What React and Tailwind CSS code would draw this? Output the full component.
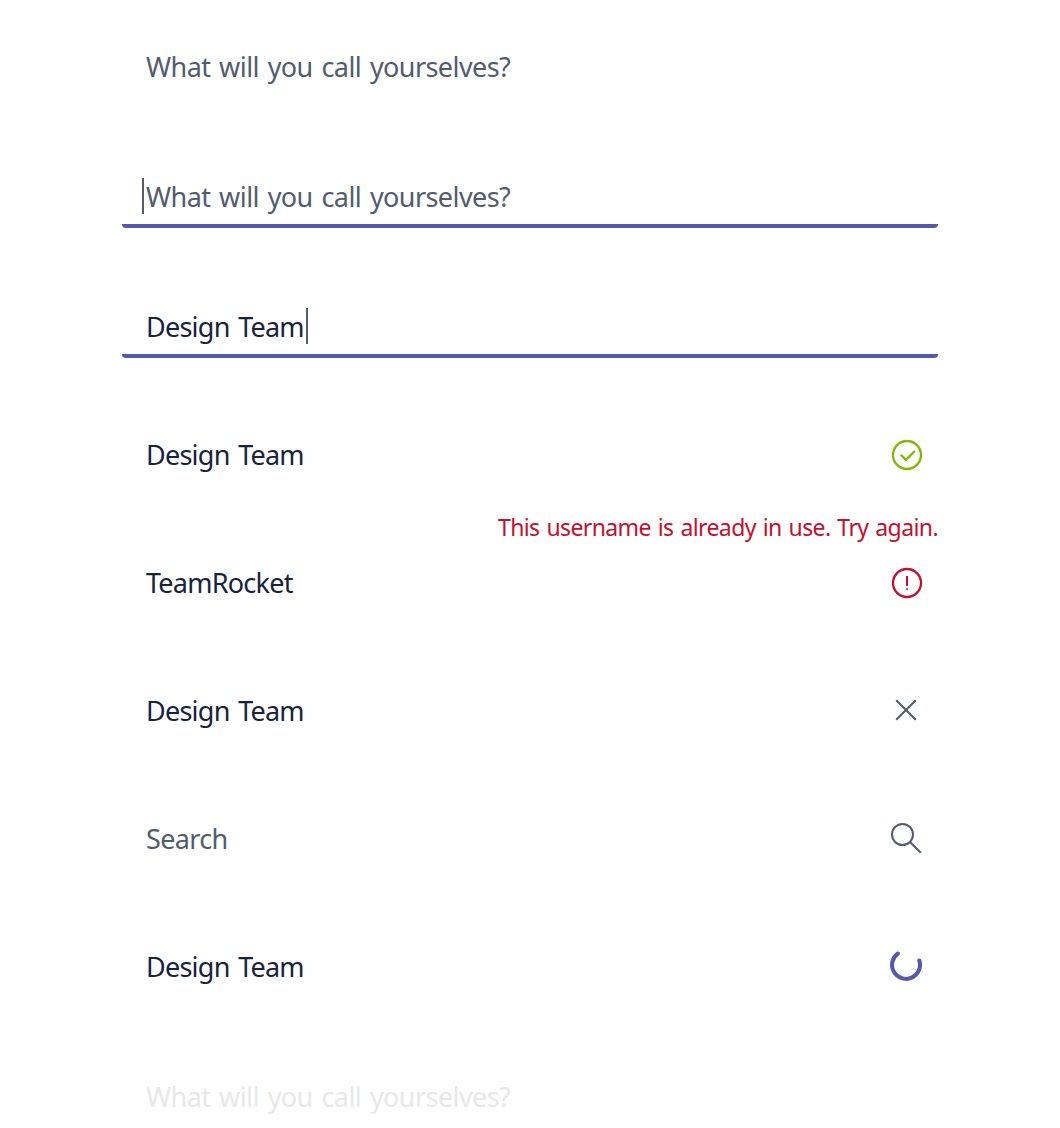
import React from "react";

const Check = () => (
  <svg className="mt-0.5 size-8" viewBox="0 0 32 32" fill="none" stroke="#7fba00">
    <circle cx="16" cy="16" r="14" strokeWidth="2.3" />
    <path d="M9.8 15.8 14.9 20.9 23.8 12" strokeWidth="2.3" />
  </svg>
);

const Alert = () => (
  <svg className="mt-0.5 size-8" viewBox="0 0 32 32" fill="none" stroke="#c50f2f">
    <circle cx="16" cy="16" r="14" strokeWidth="2.3" />
    <path d="M16 9v10" strokeWidth="2" />
    <path d="M16 21v2" strokeWidth="2" strokeOpacity="0.7" />
  </svg>
);

const Close = () => (
  <svg className="mt-0.5 size-8" viewBox="0 0 32 32" fill="none" stroke="#525c6e" strokeWidth="2">
    <path d="M5.2 5.2 24.8 24.8M24.8 5.2 5.2 24.8" />
  </svg>
);

const Search = () => (
  <svg className="mt-0.5 size-8" viewBox="0 0 32 32" fill="none" stroke="#525c6e" strokeWidth="2">
    <circle cx="11.5" cy="11.5" r="10.5" />
    <path d="M19 19 29.8 29.8" />
  </svg>
);

const Spinner = () => (
  <svg className="mr-px mb-0.5 size-8" viewBox="0 0 32 32" fill="none" stroke="#5558af" strokeWidth="4" strokeLinecap="round">
    <path d="M7.9 4.5A14 14 0 1 0 29.3 11.5" />
  </svg>
);

const Caret = () => <span className="h-9 w-0.5 shrink-0 bg-[#525c6e]" />;

const Underline = () => <div className="-mt-1 h-1 rounded-b-[4px] bg-[#5558af]" />;

function Field({ children, className = "" }) {
  return (
    <div className={`flex h-16 shrink-0 items-center justify-between pr-[15px] pl-6 ${className}`}>
      {children}
    </div>
  );
}

const prompt = "pt-0.5 tracking-[-0.58px] [word-spacing:2.3px]";
const value = "pt-0.5 text-[#16233a] tracking-[-0.76px] [word-spacing:2.3px]";

export default function App() {
  return (
    <main className="flex h-[1128px] w-[1060px] flex-col overflow-hidden bg-white px-[122px] pt-[34px] font-['Noto_Sans','Segoe_UI',sans-serif] text-[27px] leading-9 whitespace-nowrap">
      <Field>
        <span className={`text-[#525c6e] ${prompt}`}>What will you call yourselves?</span>
      </Field>

      <div className="mt-[66px] h-16">
        <div className="flex h-16 items-center pl-5">
          <Caret />
          <span className={`ml-0.5 text-[#525c6e] ${prompt}`}>What will you call yourselves?</span>
        </div>
        <Underline />
      </div>

      <div className="mt-[66px] h-16">
        <div className="flex h-16 items-center pl-6">
          <span className={`w-40 ${value}`}>Design Team</span>
          <Caret />
        </div>
        <Underline />
      </div>

      <Field className="mt-16">
        <span className={value}>Design Team</span>
        <Check />
      </Field>

      <div className="flex h-16 items-end justify-end pb-[5px] text-[23px] text-[#c50f2f]">
        <span className="tracking-[-0.6px] [word-spacing:1.5px]">This username is already in use. Try again.</span>
      </div>

      <Field>
        <span className={value}>TeamRocket</span>
        <Alert />
      </Field>

      <Field className="mt-16">
        <span className={value}>Design Team</span>
        <Close />
      </Field>

      <Field className="mt-16">
        <span className="pt-0.5 tracking-[-0.66px] text-[#525c6e]">Search</span>
        <Search />
      </Field>

      <Field className="mt-16">
        <span className={value}>Design Team</span>
        <Spinner />
      </Field>

      <Field className="mt-[66px]">
        <span className={`text-[#e8e8e8] ${prompt}`}>What will you call yourselves?</span>
      </Field>
    </main>
  );
}
